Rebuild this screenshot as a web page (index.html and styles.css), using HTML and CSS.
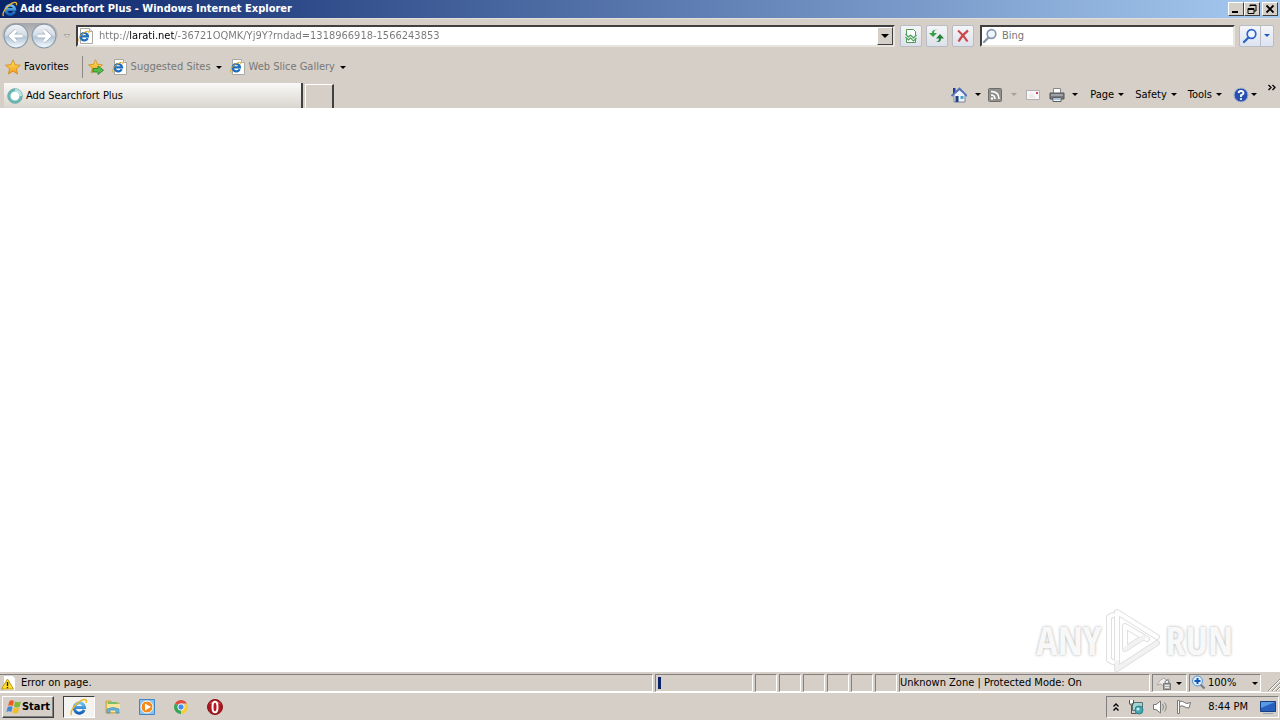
FILE: index.html
```html
<!DOCTYPE html>
<html lang="en">
<head>
<meta charset="utf-8">
<title>Add Searchfort Plus - Windows Internet Explorer</title>
<link rel="stylesheet" href="styles.css">
</head>
<body>
<svg class="defs" aria-hidden="true">
  <defs>
    <linearGradient id="blue" x1="0" y1="0" x2="0" y2="1"><stop offset="0" stop-color="#6cc4f4"/><stop offset="1" stop-color="#1560b8"/></linearGradient>
    <linearGradient id="gold" x1="0" y1="0" x2="0" y2="1"><stop offset="0" stop-color="#ffe45c"/><stop offset="1" stop-color="#f59a1c"/></linearGradient>
    <linearGradient id="orb" x1="0" y1="0" x2="0" y2="1"><stop offset="0" stop-color="#f2f4f7"/><stop offset=".45" stop-color="#d5dde6"/><stop offset=".55" stop-color="#b6c6d6"/><stop offset="1" stop-color="#f4fcff"/></linearGradient>
    <symbol id="ie" viewBox="0 0 16 16">
      <path d="M12.600 10.600A4.600 4.600 0 1 1 12.900 8.400H4.400" fill="none" stroke="url(#blue)" stroke-width="2.700"/>
      <path d="M1.600 15C-.8 12.600 4.500 5 10 2.200c3.600-1.800 5.400-.6 4.300 2" fill="none" stroke="#efb52c" stroke-width="1.300"/>
    </symbol>
    <symbol id="iepage" viewBox="0 0 16 16">
      <path d="M2.500.5h9l3 3v12h-12z" fill="#fff" stroke="#a9a9a2"/>
      <path d="M11.500.5v3h3" fill="#e8e8e8" stroke="#a9a9a2"/>
      <path d="M9.700 10.200A3.700 3.700 0 1 1 10 8.400H3.500" fill="none" stroke="#1d6dbb" stroke-width="2.200"/>
      <path d="M1 13.500C-.4 11 3 6 7.500 3.800c2.800-1.200 4-.5 3.200 1.400" fill="none" stroke="#e2a824"/>
    </symbol>
    <symbol id="star" viewBox="0 0 16 16"><path d="M8 .8l2.100 4.900 5.300.5-4 3.500 1.200 5.300L8 12.200 3.400 15l1.200-5.300-4-3.500 5.300-.5z" fill="url(#gold)" stroke="#cf8a1a" stroke-width=".8"/></symbol>
    <symbol id="glass" viewBox="0 0 16 16"><path d="M6.500 9.500L2 14" stroke="currentColor" stroke-width="2.400" stroke-linecap="round"/><circle cx="9.500" cy="6" r="4.300" fill="#eef6ff" stroke="currentColor" stroke-width="1.700"/></symbol>
  </defs>
</svg>
<div class="window">
  <header class="titlebar">
    <svg class="i16"><use href="#ie"/></svg>
    <h1 class="title">Add Searchfort Plus - Windows Internet Explorer</h1>
    <button class="winbtn" aria-label="Minimize"><svg viewBox="0 0 14 12"><path d="M3 9h6" stroke="#000" stroke-width="2"/></svg></button>
    <button class="winbtn" aria-label="Restore"><svg viewBox="0 0 14 12"><path d="M5 3.500V2h6v6H9M5 2.500h6M3 5.500h6v5H3zM3 6.500h6" fill="none" stroke="#000"/></svg></button>
    <button class="winbtn close" aria-label="Close"><svg viewBox="0 0 14 12"><path d="M3.500 2.500l7 7M10.500 2.500l-7 7" stroke="#000" stroke-width="1.800"/></svg></button>
  </header>

  <nav class="navbar">
    <div class="travel">
      <button class="orb" aria-label="Back"><svg viewBox="0 0 24 24"><circle cx="12" cy="12" r="11" fill="url(#orb)" stroke="#8797a8"/><path d="M18 12H8M12 7l-5 5 5 5" fill="none" stroke="#9fb0c2" stroke-width="4.200"/><path d="M18 12H8M12 7l-5 5 5 5" fill="none" stroke="#fff" stroke-width="2.800"/></svg></button>
      <button class="orb" aria-label="Forward"><svg viewBox="0 0 24 24"><circle cx="12" cy="12" r="11" fill="url(#orb)" stroke="#8797a8"/><path d="M6 12h10M12 7l5 5-5 5" fill="none" stroke="#9fb0c2" stroke-width="4.200"/><path d="M6 12h10M12 7l5 5-5 5" fill="none" stroke="#fff" stroke-width="2.800"/></svg></button>
    </div>
    <button class="recent" aria-label="Recent pages"><svg viewBox="0 0 8 6"><path d="M1 1.500h6L4 4.500z" fill="#e4e1da" stroke="#aaa69e"/></svg></button>
    <div class="field address">
      <svg class="i16"><use href="#iepage"/></svg>
      <input class="url" aria-label="Address" value="http://larati.net/-36721OQMK/Yj9Y?rndad=1318966918-1566243853">
      <button class="drop" aria-label="Show addresses"><i class="caret"></i></button>
    </div>
    <div class="tools">
      <button class="tool" aria-label="Compatibility View"><svg viewBox="0 0 16 16"><path d="M3.500 7V1.500h7l2 2V7M3.500 11v3.500h9V11" fill="#fff" stroke="#4c9a56"/><path d="M2.500 6l3 3 2-2 3 3 3-3M2.500 9l3 3 2-2 3 3 3-3" fill="none" stroke="#4ba457" stroke-width="1.200"/></svg></button>
      <button class="tool" aria-label="Refresh"><svg viewBox="0 0 16 16"><path d="M9 2H7Q5 2 5 5H8L4 9 0 5h3Q3 1 9 2z" fill="#36a043"/><path d="M7 14h2q3 0 3-3.500h3L11 6 7 10.500h3Q10 13 7 14z" fill="#25823a"/></svg></button>
      <button class="tool" aria-label="Stop"><svg viewBox="0 0 16 16"><path d="M3 2.500q5 4 9.500 11M13 2.500Q7 7 3.500 13.500" fill="none" stroke="#cb4848" stroke-width="2.200"/></svg></button>
    </div>
    <div class="field search">
      <svg class="i16 mag"><use href="#glass"/></svg>
      <input class="query" aria-label="Search" placeholder="Bing">
    </div>
    <div class="go">
      <button class="gobtn" aria-label="Search"><svg class="i16"><use href="#glass"/></svg></button>
      <button class="gomore" aria-label="Search options"><i class="caret"></i></button>
    </div>
  </nav>

  <div class="favbar">
    <button class="flat favs"><svg class="i16"><use href="#star"/></svg>Favorites</button>
    <button class="flat addfav" aria-label="Add to Favorites Bar"><svg class="i16" viewBox="0 0 16 16"><use href="#star" width="15" height="15"/><path d="M5 9.500h5V7l5.500 4.200L10 15.500V13H5z" fill="#56bd48" stroke="#277e2b" stroke-width=".8"/></svg></button>
    <button class="flat dim sites"><svg class="i16"><use href="#iepage"/></svg>Suggested Sites<i class="caret"></i></button>
    <button class="flat dim"><svg class="i16"><use href="#iepage"/></svg>Web Slice Gallery<i class="caret"></i></button>
  </div>

  <div class="tabrow">
    <button class="tab"><svg class="i16" viewBox="0 0 16 16"><circle cx="8" cy="8" r="6" fill="#fff" stroke="#6ab8b5" stroke-width="3"/><path d="M8 2a6 6 0 0 1 6 6" fill="none" stroke="#bce8e4" stroke-width="3"/><circle cx="8" cy="8" r="7.400" fill="none" stroke="#6c9894" stroke-width=".5"/></svg>Add Searchfort Plus</button>
    <button class="newtab" aria-label="New Tab"></button>
    <div class="commands">
      <button class="flat home" aria-label="Home"><svg class="i16" viewBox="0 0 16 16"><path d="M3 7v8h11V7L8.500 3z" fill="#eef2fb" stroke="#7a8497"/><path d="M2 1h2.500v5L2 8z" fill="#263c92"/><path d="M.5 9L8.500 1.500 16 9" fill="none" stroke="#5371b8" stroke-width="1.800"/><path d="M4.500 9h3v6h-3z" fill="#1d407e"/><path d="M9.500 9h3v3h-3z" fill="#41a6d3"/></svg><i class="caret"></i></button>
      <button class="flat feed" aria-label="Feeds"><svg class="i16" viewBox="0 0 16 16"><rect x="1.500" y="1.500" width="13" height="13" rx="1" fill="#92908d" stroke="#706e6b"/><path d="M4 8q4 0 4 4M4 4.500q8 0 8 7.500" fill="none" stroke="#fff" stroke-width="1.600"/><circle cx="5" cy="11.500" r="1.200" fill="#fff"/></svg><i class="caret pale"></i></button>
      <button class="flat mail" aria-label="Read mail"><svg class="i16" viewBox="0 0 16 16"><path d="M1.500 3.500h13v9h-13z" fill="#f8f6f6" stroke="#b2afb0"/><path d="M4 8h5M4 10h6" stroke="#e0dde0"/><path d="M11 5h2v2h-2z" fill="#cc3c5c"/></svg></button>
      <button class="flat print" aria-label="Print"><svg class="i16" viewBox="0 0 16 16"><path d="M4.500 1.500h7V7h-7z" fill="#fff" stroke="#888"/><path d="M1 6h14v6H1z" fill="#77797e" stroke="#555"/><path d="M2 8h12" stroke="#c7cbd1"/><path d="M4 10.500h8v4H4z" fill="#f3f9ff" stroke="#606060"/><path d="M5 12h6" stroke="#558fcb"/></svg><i class="caret"></i></button>
      <button class="flat menu">Page<i class="caret"></i></button>
      <button class="flat menu">Safety<i class="caret"></i></button>
      <button class="flat menu">Tools<i class="caret"></i></button>
      <button class="flat help" aria-label="Help"><svg class="i16" viewBox="0 0 16 16"><circle cx="8" cy="8" r="7" fill="#2850ad" stroke="#a9b8d3"/><path d="M5.500 6Q5.800 4 8 4t2.500 2Q10.500 7.500 8 8.200V10" fill="none" stroke="#fff" stroke-width="1.800"/><circle cx="8" cy="12" r="1.100" fill="#fff"/></svg><i class="caret"></i></button>
      <button class="flat more" aria-label="More commands"><svg viewBox="0 0 10 8"><path d="M1.500 1l2.500 2.500L1.500 6M5.500 1L8 3.500 5.500 6" fill="none" stroke="#000" stroke-width="1.300"/></svg></button>
    </div>
  </div>

  <main class="page">
    <div class="watermark">
      <span>ANY</span>
      <svg viewBox="0 0 60 64"><g fill="none" stroke-linejoin="round" stroke-linecap="round"><path d="M10 7L6 9V52L10 54M14 54V4L54 29M14 54V61L54 35M22 18V41L41 29 22 18L44 31" stroke="#e0e0e0" stroke-width="6"/><path d="M10 7L6 9V52L10 54M14 54V4L54 29M22 18V41M22 18L44 31" stroke="#fefefe" stroke-width="4"/><path d="M14 54V61L54 35M22 41L41 29" stroke="#f2f2f2" stroke-width="4"/></g></svg>
      <span>RUN</span>
    </div>
  </main>

  <footer class="status">
    <div class="pane message"><svg class="i16" viewBox="0 0 16 16"><path d="M2.500.5h9l3 3v12h-12z" fill="#fff" stroke="#d4d2c8"/><path d="M6.500 4L12.500 14H.5z" fill="#ffdf24" stroke="#c29d12"/><path d="M6.500 7v4M6.500 12v1.200" stroke="#222" stroke-width="1.400"/></svg>Error on page.</div>
    <div class="pane progress"><i class="chunk"></i></div>
    <div class="pane cell"></div><div class="pane cell"></div><div class="pane cell"></div><div class="pane cell"></div><div class="pane cell"></div><div class="pane cell"></div>
    <div class="pane zone">Unknown Zone | Protected Mode: On</div>
    <div class="pane filter"><button class="flat" aria-label="InPrivate settings"><svg class="i16" viewBox="0 0 16 16"><path d="M1 10q3-6 7-7l2 2 3-1-1 5-4 2-3-2z" fill="#efefef" stroke="#aaa"/><path d="M9 8V6.500q2.500-3 4 0V8" fill="none" stroke="#777"/><path d="M7.500 8.500h7v6h-7z" fill="#aaa" stroke="#777"/><path d="M9 10.500h4M9 12.500h4" stroke="#ececec"/></svg><i class="caret"></i></button></div>
    <div class="pane zoom"><button class="flat"><svg class="i16" viewBox="0 0 16 16"><path d="M9.500 9.500l4 4" stroke="#777f8b" stroke-width="2.400"/><circle cx="6.500" cy="6" r="5" fill="#d8edff" stroke="#5b93cf"/><path d="M3.500 6h6M6.500 3v6" stroke="#1456b6" stroke-width="2"/></svg><span>100%</span><i class="caret"></i></button></div>
    <svg class="grip" viewBox="0 0 14 14"><path d="M3 14L14 3M7 14l7-7M11 14l3-3" stroke="#fff"/><path d="M2 14L14 2M6 14l8-8M10 14l4-4" stroke="#8d8b86"/></svg>
  </footer>
</div>

<div class="taskbar">
  <button class="start"><svg class="i16" viewBox="0 0 16 16"><path d="M3.500 2Q6 .5 8 2L6.800 7Q4 5.500 2 7z" fill="#ee5c24"/><path d="M9 2.500q3 1.500 6 0L13.500 8q-3 1-5.500-.6z" fill="#7dbb32"/><path d="M1.700 8q3-1.500 4.800 0l-1.200 5Q3 11.500.4 13z" fill="#4288d8"/><path d="M7.700 8.400q2.500 1.500 5.500.6L11.800 14Q9 15 6.300 13.400z" fill="#f7bd24"/></svg>Start</button>
  <div class="launch">
    <button class="app active" aria-label="Internet Explorer"><svg viewBox="0 0 16 16"><use href="#ie"/></svg></button>
    <button class="app" aria-label="Windows Explorer"><svg viewBox="0 0 18 18"><path d="M2 3h5l1 2h7v10H2z" fill="#edc65e" stroke="#c9a44b"/><path d="M4 4h9v4H4z" fill="#76bf69"/><path d="M3 6h13v8H3z" fill="#f9e49b"/><path d="M3 15v-4q6-3 12 0v4h-3v-3H6v3z" fill="#68b5df" stroke="#4090bd" stroke-width=".7"/></svg></button>
    <button class="app" aria-label="Media Player"><svg viewBox="0 0 18 18"><path d="M1.500 1.500h15v15h-15z" fill="#88c4ef" stroke="#4184c7"/><circle cx="9" cy="9" r="6" fill="#f38a1b" stroke="#fff"/><path d="M7 5.500L13 9l-6 3.500z" fill="#fff"/></svg></button>
    <button class="app" aria-label="Chrome"><svg viewBox="0 0 18 18"><path d="M9 9L3 5.500A7 7 0 0 1 15 5.500H9z" fill="#e34b3d"/><path d="M9 9l6-3.500A7 7 0 0 1 9 16z" fill="#f7cd38"/><path d="M9 9v7A7 7 0 0 1 3 5.500z" fill="#39a457"/><circle cx="9" cy="9" r="3.200" fill="#4689ed" stroke="#fff"/></svg></button>
    <button class="app" aria-label="Opera"><svg viewBox="0 0 18 18"><circle cx="9" cy="9" r="7.500" fill="#ad1921" stroke="#851117"/><path d="M3 6q6-7 12 0" fill="#d34a4b"/><ellipse cx="9" cy="9" rx="2.500" ry="5.300" fill="#bb1720" stroke="#fff" stroke-width="2"/></svg></button>
  </div>
  <div class="tray">
    <button class="flat up" aria-label="Show hidden icons"><svg viewBox="0 0 8 10"><path d="M1.500 4.500L4 2l2.500 2.500M1.500 8.500L4 6l2.500 2.500" fill="none" stroke="#000" stroke-width="1.300"/></svg></button>
    <svg class="i16" viewBox="0 0 16 16"><path d="M4.500 3.500h10v8h-10z" fill="#9ed6d2" stroke="#5e6f72"/><path d="M1.500 1v3q0 2 2 2t2-2V1M3.500 6v8.500h5" fill="none" stroke="#555"/><path d="M2 1h3v3H2z" fill="#fff"/><circle cx="11" cy="11" r="4" fill="#47a8b1" stroke="#307d8b"/><circle cx="10" cy="10" r="1.500" fill="#c7eff0"/></svg>
    <svg class="i16" viewBox="0 0 16 16"><path d="M1.500 5.500H4L8.500 2v12L4 10.500H1.500z" fill="#fff" stroke="#777"/><path d="M10.500 5q2 3 0 6M12.500 3.500q3.500 4.500 0 9" fill="none" stroke="#888"/></svg>
    <svg class="i16" viewBox="0 0 16 16"><path d="M1.500 1.500h2v13h-2z" fill="#fff" stroke="#777"/><path d="M3.500 2.500q3-1 5 1t6 0L13 9q-3 0-5-1.500t-4.500 0z" fill="#fff" stroke="#777"/></svg>
    <time class="clock">8:44 PM</time>
    <button class="flat" aria-label="Show desktop"><svg class="i16" viewBox="0 0 16 16"><path d="M.5 2.500h15v10H.5z" fill="#2860bd" stroke="#173e81"/><path d="M1 3h14L1 9z" fill="#5a9ae4"/><path d="M3 14.500h10" stroke="#8ea4be"/></svg></button>
  </div>
</div>
</body>
</html>
```

FILE: styles.css
```css
* { box-sizing: border-box; }
body {
  margin: 0;
  height: 100vh;
  display: flex;
  flex-direction: column;
  overflow: hidden;
  background: #d5cfc7;
  color: #000;
  font: 11px/14px Tahoma, "DejaVu Sans Condensed", "DejaVu Sans", sans-serif;
}
button, input { font: inherit; color: inherit; margin: 0; padding: 0; border: 0; background: none; }
button { display: flex; align-items: center; justify-content: center; white-space: nowrap; }
svg { display: block; flex: none; }
.defs { position: absolute; width: 0; height: 0; }
.i16 { width: 16px; height: 16px; }
.caret { flex: none; border: 3px solid transparent; border-top-color: #000; border-bottom-width: 0; }
.caret.pale { border-top-color: #a5a19a; }

.window { flex: 1; min-height: 0; display: flex; flex-direction: column; }

.titlebar { height: 18px; display: flex; align-items: center; padding: 0 2px; background: linear-gradient(90deg, #0a246a, #a6caf0); }
.title { flex: 1; margin: 0 0 0 2px; color: #fff; font-size: 11px; font-weight: bold; line-height: 16px; }
.winbtn { width: 16px; height: 14px; background: #d5cfc7; border: 1px solid; border-color: #fff #404040 #404040 #fff; }
.winbtn svg { width: 14px; height: 12px; }
.winbtn.close { margin-left: 2px; }

.navbar { height: 34px; display: flex; align-items: center; padding: 0 6px 0 2px; border-top: 1px solid #e2dedb; }
.travel { display: flex; gap: 2px; padding: 0 1px; border-radius: 14px; background: linear-gradient(#a5a6ac, #d5cfc7 70%); }
.orb svg { width: 26px; height: 26px; }
.recent { width: 18px; }
.recent svg { width: 8px; height: 6px; }
.field { height: 22px; display: flex; align-items: center; background: #fff; border: 2px solid; border-color: #404040 #e8e5df #e8e5df #404040; }
.address { flex: 1; }
.url {
  flex: 1;
  min-width: 0;
  height: 18px;
  margin-left: 5px;
  color: transparent;
  background: linear-gradient(90deg, #777 31px, #000 31px, #000 75px, #777 75px);
  -webkit-background-clip: text;
  background-clip: text;
}
.drop { width: 16px; height: 18px; background: #d5cfc7; border: 1px solid; border-color: #fff #404040 #404040 #fff; }
.drop .caret { border-width: 4px 4px 0; }
.tools { display: flex; gap: 4px; margin: 0 6px 0 5px; }
.tool { width: 22px; height: 22px; border: 1px solid #b9bcc4; border-radius: 2px; background: linear-gradient(#f4f5f8, #dde1ea); }
.tool svg { width: 16px; height: 16px; }
.search { width: 255px; }
.mag { color: #8997aa; }
.query { flex: 1; min-width: 0; margin-left: 4px; }
.query::placeholder { color: #777; opacity: 1; }
.go { display: flex; height: 22px; margin-left: 4px; border: 1px solid #b9bcc4; border-radius: 2px; background: linear-gradient(#f4f5f8, #dce4f1); color: #2e65c8; }
.gobtn { width: 20px; }
.gomore { width: 13px; border-left: 1px solid #b9bcc4; }
.gomore .caret { border-top-color: #255ac0; }

.flat { gap: 3px; }
.favbar { height: 30px; display: flex; align-items: center; padding-left: 5px; }
.favs { padding-right: 13px; border-right: 1px solid #8b8984; height: 22px; }
.addfav { margin: 0 8px 0 5px; }
.dim { color: #777; }
.dim .caret { margin-left: 2px; }
.sites { margin-right: 8px; }

.tabrow { height: 26px; display: flex; align-items: flex-end; gap: 2px; padding: 0 3px 0 4px; }
.tab { width: 299px; height: 25px; justify-content: flex-start; gap: 3px; padding: 1px 3px 0; border-right: 2px solid #404040; background: linear-gradient(#faf9f8, #d9d5ce); }
.newtab { width: 29px; height: 24px; border: 1px solid #fff; border-right: 2px solid #404040; border-bottom: 0; }
.commands { flex: 1; height: 26px; display: flex; align-items: center; justify-content: flex-end; padding-bottom: 1px; }
.home { gap: 8px; }
.print { gap: 7px; }
.home, .feed { margin-right: 6px; }
.feed { gap: 8px; margin-right: 8px; }
.mail { margin-right: 8px; }
.print { margin-right: 12px; }
.menu { gap: 4px; margin-right: 11px; }
.help { gap: 2px; margin-right: 10px; }
.more { align-self: flex-start; margin-top: 2px; }
.more svg { width: 10px; height: 8px; }

.page { flex: 1; min-height: 0; display: flex; align-items: flex-end; justify-content: flex-end; padding-right: 47px; background: #fff; }
.watermark { display: flex; align-items: center; gap: 2px; color: #f8f8f8; font: 300 40px/62px "Open Sans Condensed", "Open Sans", sans-serif; text-shadow: 0 0 3px #aaa; }
.watermark svg { width: 60px; height: 64px; }

.status { height: 21px; display: flex; gap: 2px; padding: 2px 0 1px; border-bottom: 1px solid #fff; }
.pane { display: flex; align-items: center; height: 18px; border: 1px solid; border-color: #808080 #fff #fff #808080; white-space: nowrap; }
.message { flex: 1; gap: 4px; padding-left: 1px; border-left: 0; }
.progress { width: 98px; padding-left: 2px; }
.chunk { width: 3px; height: 12px; background: #0a246a; }
.cell { width: 22px; }
.zone { width: 251px; }
.filter { width: 35px; padding-left: 3px; }
.filter .flat { gap: 4px; }
.zoom { width: 72px; padding-left: 1px; }
.zoom .flat { flex: 1; gap: 1px; padding-right: 2px; }
.zoom .caret { margin-left: auto; }
.grip { width: 14px; height: 14px; margin-left: 3px; align-self: flex-end; }

.taskbar { height: 27px; display: flex; align-items: center; padding: 0 1px 0 2px; }
.start { width: 52px; height: 22px; font-weight: bold; border: 1px solid; border-color: #fff #404040 #404040 #fff; box-shadow: inset -1px -1px #808080; }
.launch { flex: 1; display: flex; gap: 2px; padding-left: 9px; }
.app { width: 32px; height: 22px; border: 1px solid transparent; }
.app svg { width: 18px; height: 18px; }
.app.active { background: #f5f3f0; border-color: #404040 #fff #fff #404040; }
.tray { display: flex; align-items: center; height: 22px; gap: 8px; padding: 0 2px 0 5px; border: 1px solid; border-color: #808080 #fff #fff #808080; }
.up svg { width: 8px; height: 10px; }
.clock { padding: 0 4px 0 8px; }
```
